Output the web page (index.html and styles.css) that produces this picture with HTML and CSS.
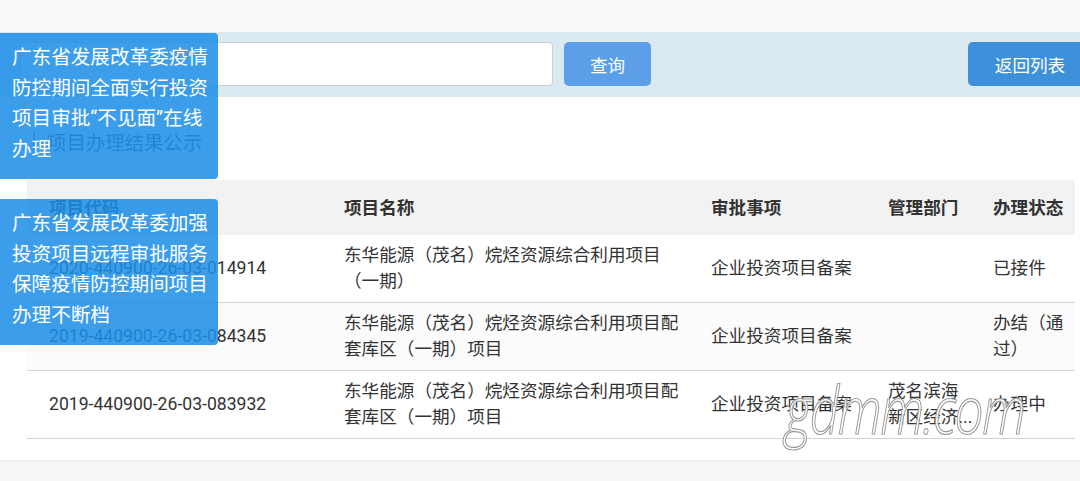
FILE: index.html
```html
<!DOCTYPE html>
<html lang="zh-CN">
<head>
<meta charset="utf-8">
<title>项目办理结果公示</title>
<link rel="stylesheet" href="styles.css">
</head>
<body>
<div class="page">
  <div class="top-gap"></div>
  <div class="search-band">
    <input class="search-input" type="text">
    <button class="btn btn-query">查询</button>
    <div class="spacer"></div>
    <button class="btn btn-back">返回列表</button>
  </div>
  <div class="card">
    <div class="section-title">项目办理结果公示</div>
    <table class="result-table">
      <colgroup>
        <col class="c1"><col class="c2"><col class="c3"><col class="c4"><col class="c5">
      </colgroup>
      <thead>
        <tr><th>项目代码</th><th>项目名称</th><th>审批事项</th><th>管理部门</th><th>办理状态</th></tr>
      </thead>
      <tbody>
        <tr>
          <td>2020-440900-26-03-014914</td>
          <td>东华能源（茂名）烷烃资源综合利用项目（一期）</td>
          <td>企业投资项目备案</td>
          <td></td>
          <td>已接件</td>
        </tr>
        <tr class="alt">
          <td>2019-440900-26-03-084345</td>
          <td>东华能源（茂名）烷烃资源综合利用项目配套库区（一期）项目</td>
          <td>企业投资项目备案</td>
          <td></td>
          <td>办结（通过）</td>
        </tr>
        <tr>
          <td>2019-440900-26-03-083932</td>
          <td>东华能源（茂名）烷烃资源综合利用项目配套库区（一期）项目</td>
          <td>企业投资项目备案</td>
          <td class="dept">茂名滨海<br>新区经济...</td>
          <td>办理中</td>
        </tr>
      </tbody>
    </table>
  </div>
</div>
<div class="notice notice-1">广东省发展改革委疫情防控期间全面实行投资项目审批“不见面”在线办理</div>
<div class="notice notice-2">广东省发展改革委加强投资项目远程审批服务保障疫情防控期间项目办理不断档</div>
<div class="watermark">gdmm.com</div>
</body>
</html>
```

FILE: styles.css
```css
html, body {
  margin: 0;
  padding: 0;
  overflow: hidden;
}
body {
  background: #f7f7f7;
  font-family: "Roboto", "Noto Sans CJK SC", sans-serif;
  color: #333;
  width: 1080px;
  height: 481px;
  position: relative;
}
.page {
  display: flex;
  flex-direction: column;
}
.top-gap {
  height: 32px;
  background: #f9f9f9;
}
.search-band {
  height: 65px;
  box-sizing: border-box;
  padding: 10px 0 11px 20px;
  background: #dbeaf1;
  display: flex;
  align-items: stretch;
  margin-right: -12px;
}
.search-input {
  width: 533px;
  box-sizing: border-box;
  border: 1px solid #c9cfd4;
  border-radius: 4px;
  background: #fff;
  margin: 0;
}
.btn {
  border: none;
  color: #fff;
  font-family: "Roboto", "Noto Sans CJK SC", sans-serif;
  font-size: 17.6px;
  border-radius: 5px;
  padding: 0;
}
.btn-query {
  width: 87px;
  margin-left: 11px;
  background: #5b9fe8;
}
.spacer { flex: 1; }
.btn-back {
  width: 124px;
  background: #3d90da;
}
.card {
  background: #fff;
  padding: 35px 5px 21px 27px;
  box-shadow: 0 1px 2px rgba(0,0,0,0.06);
}
.section-title {
  font-size: 19.4px;
  line-height: 24px;
  color: #4a5560;
  border-left: 2px solid #8a96a0;
  margin-left: 6px;
  padding-left: 12px;
  margin-bottom: 24px;
}
.result-table {
  width: 1048px;
  border-collapse: collapse;
  table-layout: fixed;
  font-size: 17.6px;
  line-height: 26px;
}
.c1 { width: 295px; }
.c2 { width: 367px; }
.c3 { width: 177px; }
.c4 { width: 105px; }
.c5 { width: 104px; }
.result-table th {
  background: #f2f2f2;
  font-weight: bold;
  text-align: left;
  height: 55px;
  padding: 0 0 0 22px;
  color: #333;
}
.result-table td {
  padding: 7px 0 8px 22px;
  height: 52px;
  vertical-align: middle;
  border-bottom: 1px solid #d2d2d2;
  color: #333;
}
.result-table tr.alt td {
  background: #fbfbfb;
}
.result-table td.dept {
  white-space: nowrap;
}
.notice {
  position: absolute;
  left: 0;
  width: 218px;
  box-sizing: border-box;
  padding: 10px 8px 5px 12px;
  background: rgba(28, 142, 232, 0.86);
  color: #fff;
  font-size: 19.6px;
  line-height: 30.5px;
  border-radius: 0 4px 4px 0;
}
.notice-1 { top: 33px; height: 146px; }
.notice-2 { top: 199px; height: 146px; }
.watermark {
  position: absolute;
  left: 785px;
  top: 368px;
  font-family: "Open Sans", "Liberation Sans", sans-serif;
  font-style: italic;
  font-weight: 300;
  font-size: 66px;
  line-height: 80px;
  letter-spacing: -2px;
  transform: scaleX(0.78);
  transform-origin: left top;
  color: rgba(255,255,255,0.85);
  -webkit-text-stroke: 1.2px #9a9a9a;
}
```
